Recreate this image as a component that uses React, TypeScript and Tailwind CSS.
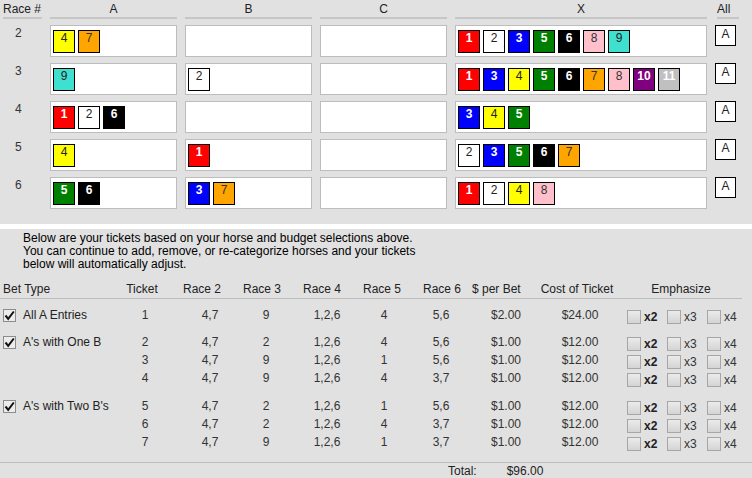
import React from "react";

const horseStyle: Record<number, string> = {
  1: "bg-[#ff0000] text-white font-bold",
  2: "bg-white text-[#222]",
  3: "bg-[#0000ff] text-white font-bold",
  4: "bg-[#ffff00] text-[#222]",
  5: "bg-[#008000] text-white font-bold",
  6: "bg-black text-white font-bold",
  7: "bg-[#ffa500] text-[#333]",
  8: "bg-[#ffc0cb] text-[#333]",
  9: "bg-[#40e0d0] text-[#222]",
  10: "bg-[#800080] text-white font-bold",
  11: "bg-[#c0c0c0] text-white font-bold",
};

const races = [
  { race: 2, a: [4, 7], b: [], c: [], x: [1, 2, 3, 5, 6, 8, 9] },
  { race: 3, a: [9], b: [2], c: [], x: [1, 3, 4, 5, 6, 7, 8, 10, 11] },
  { race: 4, a: [1, 2, 6], b: [], c: [], x: [3, 4, 5] },
  { race: 5, a: [4], b: [1], c: [], x: [2, 3, 5, 6, 7] },
  { race: 6, a: [5, 6], b: [3, 7], c: [], x: [1, 2, 4, 8] },
];

const groups = [
  {
    label: "All A Entries",
    mt: "mt-[7px]",
    rows: [["1", "4,7", "9", "1,2,6", "4", "5,6", "$2.00", "$24.00"]],
  },
  {
    label: "A's with One B",
    mt: "mt-[9px]",
    rows: [
      ["2", "4,7", "2", "1,2,6", "4", "5,6", "$1.00", "$12.00"],
      ["3", "4,7", "9", "1,2,6", "1", "5,6", "$1.00", "$12.00"],
      ["4", "4,7", "9", "1,2,6", "4", "3,7", "$1.00", "$12.00"],
    ],
  },
  {
    label: "A's with Two B's",
    mt: "mt-[10px]",
    rows: [
      ["5", "4,7", "2", "1,2,6", "1", "5,6", "$1.00", "$12.00"],
      ["6", "4,7", "2", "1,2,6", "4", "3,7", "$1.00", "$12.00"],
      ["7", "4,7", "9", "1,2,6", "1", "3,7", "$1.00", "$12.00"],
    ],
  },
];

const Horse = ({ n }: { n: number }) => (
  <div
    className={`w-[22px] h-[23px] border border-black flex justify-center text-[12px] leading-[14px] ${horseStyle[n]}`}
  >
    {n}
  </div>
);

const Cell = ({ horses }: { horses: number[] }) => (
  <div className="h-[32px] bg-white border border-[#bdbdbd] pl-[2px] pt-[4px] flex gap-[3px]">
    {horses.map((h) => (
      <Horse key={h} n={h} />
    ))}
  </div>
);

const CheckedBox = () => (
  <div className="w-[13px] h-[13px] border border-[#8c8c8c] bg-[#ececec] flex items-center justify-center">
    <svg width="11" height="11" viewBox="0 0 11 11">
      <path d="M1.5 5.5 L4.2 8.8 L9.8 1.5" fill="none" stroke="#111" strokeWidth="2" />
    </svg>
  </div>
);

const Emph = () => (
  <div className="flex translate-y-[2px]">
    {["x2", "x3", "x4"].map((x) => (
      <div key={x} className="w-[40px] flex items-center gap-[3px]">
        <div className="w-[14px] h-[14px] border border-[#a6a6a6] bg-gradient-to-b from-[#ebebeb] to-[#d4d4d4]" />
        <span className={x === "x2" ? "font-bold text-[#222]" : "text-[#333]"}>{x}</span>
      </div>
    ))}
  </div>
);

export default function App() {
  return (
    <div className="w-[752px] h-[478px] bg-[#e1e1e1] font-['Liberation_Sans',Arial,sans-serif] text-[12px] text-[#222] overflow-hidden">
      <section className="h-[224px] pl-[3px]">
        <div className="grid grid-cols-[39px_127px_127px_127px_252px_24px] gap-x-2 gap-y-[6px]">
          {["Race #", "A", "B", "C", "X", "All"].map((h, i) => (
            <div
              key={h}
              className={`pt-[2px] pb-[1px] leading-[14px] border-b-2 border-[#c6c6c6] ${i === 0 ? "text-left" : "text-center"} ${i === 5 ? "ml-[2px] text-left" : ""}`}
            >
              {h}
            </div>
          ))}
          {races.map((r) => (
            <React.Fragment key={r.race}>
              <div className="pl-[12px] pt-[1px] leading-[14px] text-[#333]">{r.race}</div>
              <Cell horses={r.a} />
              <Cell horses={r.b} />
              <Cell horses={r.c} />
              <Cell horses={r.x} />
              <div className="w-[21px] h-[21px] bg-white border border-black text-center leading-[16px]">A</div>
            </React.Fragment>
          ))}
        </div>
      </section>
      <div className="h-[5px] bg-white" />
      <section>
        <p className="pl-[23px] pt-[3px] leading-[13px] text-black">
          Below are your tickets based on your horse and budget selections above.
          <br />
          You can continue to add, remove, or re-categorize horses and your tickets
          <br />
          below will automatically adjust.
        </p>
        <div className="mt-[9px] w-[742px] grid grid-cols-[112px_60px_60px_60px_60px_60px_60px_46px_118px_90px] leading-[18px] border-b border-[#bcbcbc] text-center">
          <div className="text-left pl-[3px]">Bet Type</div>
          <div>Ticket</div>
          <div>Race 2</div>
          <div>Race 3</div>
          <div>Race 4</div>
          <div>Race 5</div>
          <div>Race 6</div>
          <div className="whitespace-nowrap">$ per Bet</div>
          <div>Cost of Ticket</div>
          <div>Emphasize</div>
        </div>
        {groups.map((g) => (
          <div key={g.label} className={g.mt}>
            {g.rows.map((row, ri) => (
              <div
                key={row[0]}
                className="grid grid-cols-[113px_64px_66px_46px_76px_38px_76px_54px_94px_1fr] h-[18px] leading-[18px] text-center text-[#333]"
              >
                <div className="flex items-center gap-[7px] pl-[3px] text-left text-[#222]">
                  {ri === 0 && (
                    <>
                      <CheckedBox />
                      <span>{g.label}</span>
                    </>
                  )}
                </div>
                {row.map((v, i) => (
                  <div key={i}>{v}</div>
                ))}
                <Emph />
              </div>
            ))}
          </div>
        ))}
        <div className="mt-[11px] border-t border-[#bcbcbc] flex pl-[448px] gap-[30px] leading-[14px] pt-[1px]">
          <span>Total:</span>
          <span>$96.00</span>
        </div>
      </section>
    </div>
  );
}
